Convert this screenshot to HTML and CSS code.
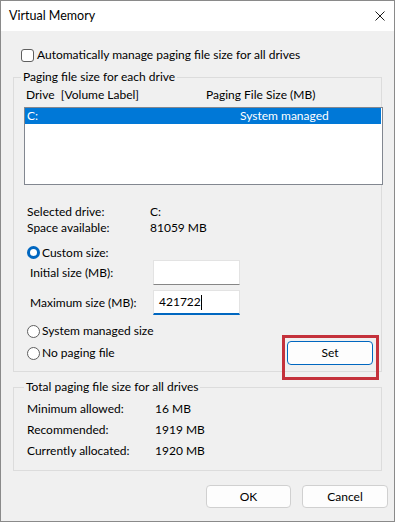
FILE: index.html
```html
<html>
<head>
<meta http-equiv="Content-Type" content="text/html; charset=UTF-8">
<link rel="stylesheet" href="styles.css">
</head>
<body>
<div class="window">
<div class="titlebar">
    <span class="title">Virtual Memory</span>
    <svg class="close" viewBox="0 0 10 10"><path d="M0.5 0.5 L9.5 9.5 M9.5 0.5 L0.5 9.5" stroke="#1a1a1a" stroke-width="1" fill="none"/></svg>
</div>
<div class="content">
    <div class="auto-row"><span class="checkbox"></span><span>Automatically manage paging file size for all drives</span></div>

    <fieldset class="group drives">
        <legend>Paging file size for each drive</legend>
        <div class="list-head"><span class="col-drive">Drive&nbsp; [Volume Label]</span><span>Paging File Size (MB)</span></div>
        <div class="listbox">
            <div class="list-row selected"><span class="col-drive">C:</span><span>System managed</span></div>
        </div>

        <div class="info">
            <div class="info-row"><span class="info-label">Selected drive:</span><span>C:</span></div>
            <div class="info-row"><span class="info-label">Space available:</span><span>81059 MB</span></div>
        </div>

        <div class="radio-row custom"><span class="radio checked"></span><span>Custom size:</span></div>
        <div class="size-row"><span class="size-label">Initial size (MB):</span><span class="field"></span></div>
        <div class="size-row second"><span class="size-label">Maximum size (MB):</span><span class="field focused">421722<span class="caret"></span></span></div>

        <div class="radio-row managed"><span class="radio"></span><span>System managed size</span></div>
        <div class="nopage-row">
            <div class="radio-row"><span class="radio"></span><span>No paging file</span></div>
            <div class="set-wrap"><div class="btn set">Set</div></div>
        </div>
    </fieldset>

    <fieldset class="group totals">
        <legend>Total paging file size for all drives</legend>
        <div class="total-row"><span class="total-label">Minimum allowed:</span><span>16 MB</span></div>
        <div class="total-row"><span class="total-label">Recommended:</span><span>1919 MB</span></div>
        <div class="total-row"><span class="total-label">Currently allocated:</span><span>1920 MB</span></div>
    </fieldset>

    <div class="buttons">
        <div class="btn ok">OK</div>
        <div class="btn cancel">Cancel</div>
    </div>
</div>
</div>
</body>
</html>
```

FILE: styles.css
```css
body {
    margin: 0;
    font-family: Lato, "Noto Sans", sans-serif;
    font-size: 12px;
    line-height: 16px;
    color: #000;
    background: #fff;
}

/* dialog frame */
.window {
    width: 395px;
    height: 522px;
    box-sizing: border-box;
    border: 1px solid #8a8a8a;
    background: #f0f0f0;
}
.titlebar {
    height: 30px;
    background: #fff;
    display: flex;
    align-items: center;
    justify-content: space-between;
    padding: 0 9px 0 8px;
}
.title {
    font-size: 12.5px;
}
.close {
    width: 10px;
    height: 10px;
}

.content {
    padding: 16px 6px 0 12px;
}

.auto-row {
    display: flex;
    align-items: center;
    gap: 3px;
    height: 16px;
    padding-left: 8px;
}
.checkbox {
    width: 13px;
    height: 13px;
    box-sizing: border-box;
    border: 1px solid #5f5f5f;
    border-radius: 3px;
    background: #fff;
}

/* group boxes */
.group {
    margin: 6px 6px 0 0;
    border: 1px solid #dcdcdc;
    min-width: 0;
}
.group legend {
    padding: 0 2px;
    margin-left: -3px;
}
.drives {
    padding: 2px 0 6px 10px;
}
.totals {
    margin-top: 7px;
    padding: 3px 0 9px 13px;
}

/* drive list */
.list-head {
    display: flex;
    padding-left: 2px;
}
.list-head .col-drive {
    width: 180px;
}
.listbox {
    margin-top: 4px;
    width: 359px;
    height: 78px;
    box-sizing: border-box;
    border: 1px solid #828790;
    background: #fff;
    padding-right: 1px;
}
.list-row {
    display: flex;
    height: 16px;
    padding-left: 2px;
}
.list-row .col-drive {
    width: 213px;
}
.list-row.selected {
    background: #0078d7;
    color: #fff;
}

.info {
    margin-top: 19px;
    padding-left: 3px;
}
.info-row {
    display: flex;
    height: 16px;
}
.info-label {
    width: 123px;
}

/* radios */
.radio-row {
    display: flex;
    align-items: center;
    gap: 2px;
    height: 16px;
    padding-left: 3px;
}
.radio {
    width: 13px;
    height: 13px;
    box-sizing: border-box;
    border: 1px solid #5f5f5f;
    border-radius: 50%;
    background: #fff;
}
.radio.checked {
    border: 3px solid #0067c0;
}
.radio-row.custom {
    margin-top: 9px;
    height: 15px;
}
.radio-row.managed {
    margin-top: 8px;
}

/* size inputs */
.size-row {
    display: flex;
    align-items: center;
    padding-left: 6px;
}
.size-row.second {
    margin-top: 5px;
}
.size-label {
    width: 123px;
}
.field {
    width: 87px;
    height: 25px;
    box-sizing: border-box;
    background: #fff;
    border: 1px solid #e3e3e3;
    border-bottom-color: #868686;
    padding-left: 5px;
    display: flex;
    align-items: center;
}
.field.focused {
    border-bottom: 2px solid #0067c0;
}
.caret {
    width: 1px;
    height: 15px;
    background: #000;
}

.nopage-row {
    display: flex;
    align-items: center;
    justify-content: space-between;
    margin-top: 2px;
    height: 24px;
}

/* buttons */
.btn {
    box-sizing: border-box;
    height: 23px;
    border: 1px solid #d0d0d0;
    border-radius: 4px;
    background: #fdfdfd;
    display: flex;
    align-items: center;
    justify-content: center;
}
.set-wrap {
    position: relative;
    margin-right: 8px;
}
.btn.set {
    width: 86px;
    height: 24px;
    border-color: #0067c0;
}
/* red highlight drawn over the dialog */
.set-wrap::after {
    content: "";
    position: absolute;
    top: -6px;
    left: -5px;
    right: -6px;
    bottom: -15px;
    border: 3px solid #c4313b;
}

.total-row {
    display: flex;
    height: 21px;
    align-items: center;
}
.total-label {
    width: 128px;
}

.buttons {
    display: flex;
    justify-content: flex-end;
    gap: 11px;
    margin-top: 14px;
}
.btn.ok {
    width: 85px;
}
.btn.cancel {
    width: 86px;
}
```
